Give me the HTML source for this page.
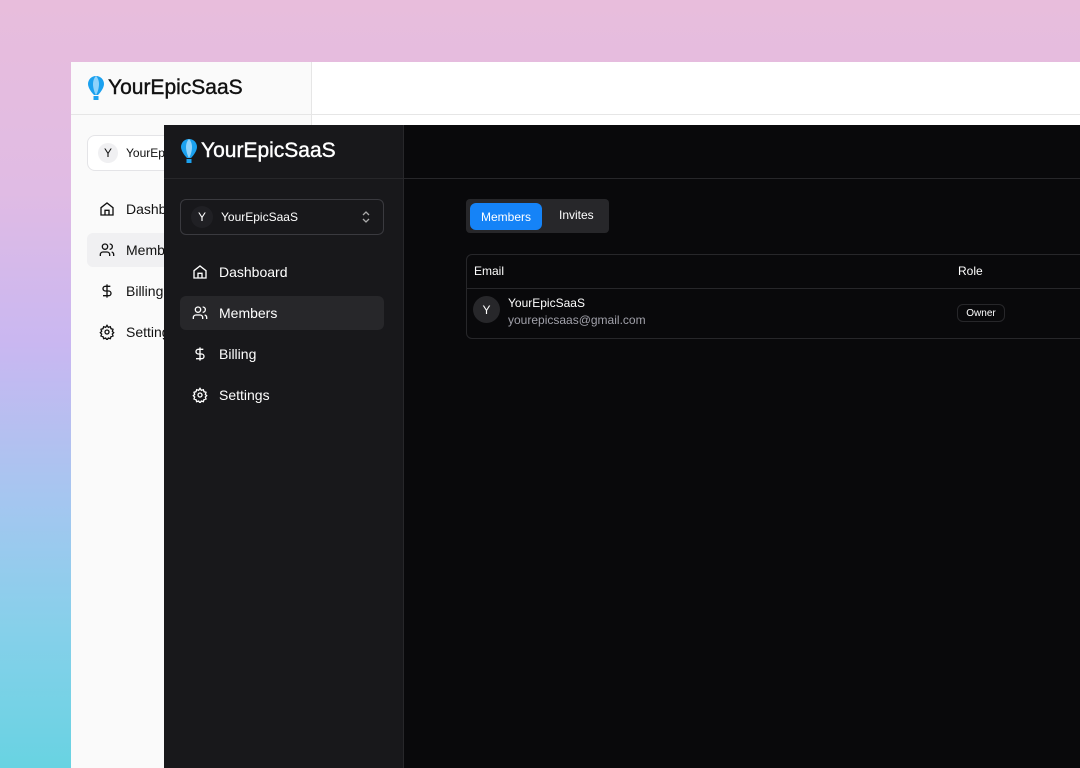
<!DOCTYPE html>
<html><head><meta charset="utf-8"><style>
*{box-sizing:border-box;margin:0;padding:0}
body{width:1080px;height:768px;overflow:hidden;position:relative;font-family:"Liberation Sans",sans-serif;background:linear-gradient(180deg,#e8bddc 0%,#e0bbe4 25%,#c9b7f1 45%,#a5c6f0 65%,#86d0ea 82%,#68d3e2 100%)}
.abs{position:absolute}
.light{left:71px;top:62px;width:1009px;height:706px;background:#fff}
.lside{left:0;top:0;width:241px;height:706px;background:#fafafa;border-right:1px solid #e6e6e6}
.lhead{left:0;top:52px;width:1009px;height:1px;background:#e6e6e6}
.logo{display:flex;align-items:center;font-weight:normal;font-size:21px;letter-spacing:0px;-webkit-text-stroke:0.4px currentColor}
.dark{left:164px;top:125px;width:916px;height:643px;background:#09090b}
.dside{left:0;top:0;width:240px;height:643px;background:#18181b;border-right:1px solid #27272a}
.dhead{left:0;top:53px;width:916px;height:1px;background:#27272a}
.nav{display:flex;align-items:center;font-size:14px;height:34px;border-radius:6px;padding-left:12px}
.nav svg{margin-right:11px}
</style></head><body>
<div class="abs light">
 <div class="abs lside"></div>
 <div class="abs lhead"></div>
 <div class="abs logo" style="left:16px;top:13px;color:#111">
  <svg width="18" height="26" viewBox="0 0 18 26"><path d="M9 1C4 1 1 5 1 9c0 4 4 9 6 11h4c2-2 6-7 6-11 0-4-3-8-8-8z" fill="#1ba1ef"/><path d="M9 1c-2 2-3 5-3 8s1 8 3 11c2-3 3-8 3-11S11 3 9 1z" fill="#8fd3fb"/><rect x="6.5" y="21" width="5" height="4" fill="#1ba1ef"/></svg>
  <span style="margin-left:3px">YourEpicSaaS</span></div>
 <div class="abs" style="left:16px;top:73px;width:200px;height:36px;border:1px solid #e4e4e7;border-radius:8px;background:#fff;font-size:12px;color:#111;display:flex;align-items:center;padding-left:10px"><span style="width:20px;height:20px;border-radius:50%;background:#f0f0f2;display:inline-flex;align-items:center;justify-content:center;margin-right:8px">Y</span>YourEpicSaaS</div>
 <div class="abs nav" style="left:16px;top:130px;width:200px;color:#111"><svg width="16" height="16" viewBox="0 0 24 24" fill="none" stroke="#111" stroke-width="2"><path d="M3 10l9-7 9 7v11H3z"/><path d="M9 21v-7h6v7"/></svg>Dashboard</div>
 <div class="abs nav" style="left:16px;top:171px;width:200px;color:#111;background:#f0f0f2"><svg width="16" height="16" viewBox="0 0 24 24" fill="none" stroke="#111" stroke-width="2"><circle cx="9" cy="7" r="4"/><path d="M2 21v-2a4 4 0 0 1 4-4h6a4 4 0 0 1 4 4v2M16 3a4 4 0 0 1 0 8M22 21v-2a4 4 0 0 0-3-4"/></svg>Members</div>
 <div class="abs nav" style="left:16px;top:212px;width:200px;color:#111"><svg width="16" height="16" viewBox="0 0 24 24" fill="none" stroke="#111" stroke-width="2"><path d="M12 2v20M17 5H9.5a3.5 3.5 0 0 0 0 7h5a3.5 3.5 0 0 1 0 7H6"/></svg>Billing</div>
 <div class="abs nav" style="left:16px;top:253px;width:200px;color:#111"><svg width="16" height="16" viewBox="0 0 24 24" fill="none" stroke="#111" stroke-width="2"><circle cx="12" cy="12" r="3"/><path d="M12 2l2 3 3-1 1 3 3 1-1 3 2 2-2 2 1 3-3 1-1 3-3-1-2 3-2-3-3 1-1-3-3-1 1-3-2-2 2-2-1-3 3-1 1-3 3 1z"/></svg>Settings</div>
</div>
<div class="abs dark">
 <div class="abs dside"></div>
 <div class="abs dhead"></div>
 <div class="abs logo" style="left:16px;top:13px;color:#fff">
  <svg width="18" height="26" viewBox="0 0 18 26"><path d="M9 1C4 1 1 5 1 9c0 4 4 9 6 11h4c2-2 6-7 6-11 0-4-3-8-8-8z" fill="#1ba1ef"/><path d="M9 1c-2 2-3 5-3 8s1 8 3 11c2-3 3-8 3-11S11 3 9 1z" fill="#8fd3fb"/><rect x="6.5" y="21" width="5" height="4" fill="#1ba1ef"/></svg>
  <span style="margin-left:3px">YourEpicSaaS</span></div>
 <div class="abs" style="left:16px;top:74px;width:204px;height:36px;border:1px solid #3a3a3f;border-radius:6px;font-size:12px;color:#fff;display:flex;align-items:center;padding-left:10px"><span style="width:22px;height:22px;border-radius:50%;background:#202024;display:inline-flex;align-items:center;justify-content:center;margin-right:8px">Y</span>YourEpicSaaS<svg style="margin-left:auto;margin-right:12px" width="10" height="14" viewBox="0 0 10 14" fill="none" stroke="#aaa" stroke-width="1.3"><path d="M2 5l3-3 3 3M2 9l3 3 3-3"/></svg></div>
 <div class="abs nav" style="left:16px;top:130px;width:204px;color:#fff"><svg width="16" height="16" viewBox="0 0 24 24" fill="none" stroke="#fff" stroke-width="2"><path d="M3 10l9-7 9 7v11H3z"/><path d="M9 21v-7h6v7"/></svg>Dashboard</div>
 <div class="abs nav" style="left:16px;top:171px;width:204px;color:#fff;background:#27272a"><svg width="16" height="16" viewBox="0 0 24 24" fill="none" stroke="#fff" stroke-width="2"><circle cx="9" cy="7" r="4"/><path d="M2 21v-2a4 4 0 0 1 4-4h6a4 4 0 0 1 4 4v2M16 3a4 4 0 0 1 0 8M22 21v-2a4 4 0 0 0-3-4"/></svg>Members</div>
 <div class="abs nav" style="left:16px;top:212px;width:204px;color:#fff"><svg width="16" height="16" viewBox="0 0 24 24" fill="none" stroke="#fff" stroke-width="2"><path d="M12 2v20M17 5H9.5a3.5 3.5 0 0 0 0 7h5a3.5 3.5 0 0 1 0 7H6"/></svg>Billing</div>
 <div class="abs nav" style="left:16px;top:253px;width:204px;color:#fff"><svg width="16" height="16" viewBox="0 0 24 24" fill="none" stroke="#fff" stroke-width="2"><circle cx="12" cy="12" r="3"/><path d="M12 2l2 3 3-1 1 3 3 1-1 3 2 2-2 2 1 3-3 1-1 3-3-1-2 3-2-3-3 1-1-3-3-1 1-3-2-2 2-2-1-3 3-1 1-3 3 1z"/></svg>Settings</div>
 <div class="abs" style="left:302px;top:74px;width:143px;height:34px;background:#27272a;border-radius:4px"></div>
 <div class="abs" style="left:306px;top:78px;width:72px;height:27px;background:#1583f7;border-radius:6px;color:#fff;font-size:12px;display:flex;align-items:center;justify-content:center">Members</div>
 <div class="abs" style="left:395px;top:83px;color:#fff;font-size:12px">Invites</div>
 <div class="abs" style="left:302px;top:129px;width:640px;height:85px;border:1px solid #27272a;border-radius:6px"></div>
 <div class="abs" style="left:302px;top:163px;width:620px;height:1px;background:#27272a"></div>
 <div class="abs" style="left:310px;top:139px;color:#fff;font-size:12px">Email</div>
 <div class="abs" style="left:794px;top:139px;color:#fff;font-size:12px">Role</div>
 <div class="abs" style="left:309px;top:171px;width:27px;height:27px;border-radius:50%;background:#27272a;color:#fff;font-size:12px;display:flex;align-items:center;justify-content:center">Y</div>
 <div class="abs" style="left:344px;top:171px;color:#fff;font-size:12px">YourEpicSaaS</div>
 <div class="abs" style="left:344px;top:188px;color:#a1a1aa;font-size:12px">yourepicsaas@gmail.com</div>
 <div class="abs" style="left:793px;top:179px;width:48px;height:18px;border:1px solid #27272a;border-radius:6px;color:#fff;font-size:10px;display:flex;align-items:center;justify-content:center">Owner</div>
</div>
</body></html>
